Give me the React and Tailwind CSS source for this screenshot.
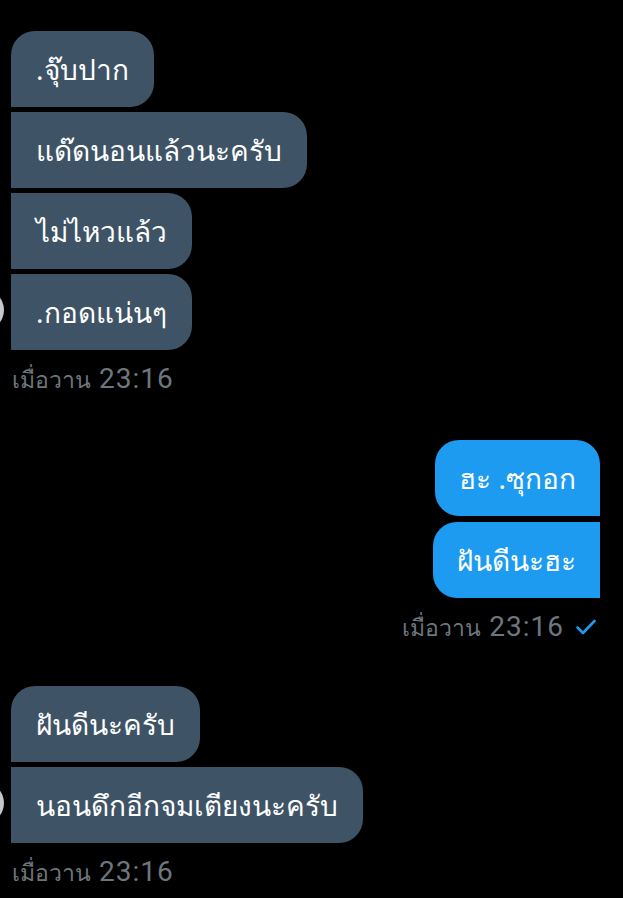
import React from "react";

const font = { fontFamily: '"Noto Sans", Roboto, "Open Sans", sans-serif' };

const Received = ({ text, pos, avatar }) => {
  const corners =
    pos === "first"
      ? "rounded-tl-[24px] rounded-tr-[24px] rounded-br-[24px]"
      : "rounded-tr-[24px] rounded-br-[24px]";
  return (
    <div className="relative flex">
      {avatar && (
        <div className="absolute left-[-49px] top-[15px] w-[42px] h-[42px] rounded-full bg-[#c4c8cc]" />
      )}
      <div className={`bg-[#3e5466] text-white text-[28px] leading-[36px] px-[25px] py-[20px] ${corners}`}>
        {text}
      </div>
    </div>
  );
};

const Sent = ({ text, pos }) => {
  const corners =
    pos === "first"
      ? "rounded-tl-[24px] rounded-tr-[24px] rounded-bl-[24px]"
      : "rounded-tl-[24px] rounded-bl-[24px]";
  return (
    <div className="flex justify-end">
      <div className={`bg-[#1d9bf0] text-white text-[28px] leading-[36px] px-[24px] py-[20px] ${corners}`}>
        {text}
      </div>
    </div>
  );
};

const Stamp = ({ right, read }) => (
  <div className={`flex items-center mt-[14px] h-[30px] text-[#6e767d] ${right ? "justify-end" : ""}`}>
    <span className="text-[23px] leading-[30px]">เมื่อวาน</span>
    <span className="ml-[8px] text-[28px] leading-[30px] tracking-[1px] font-['Roboto']">23:16</span>
    {read && (
      <svg width="24" height="24" viewBox="0 0 24 24" className="ml-[10px]">
        <path d="M3.5 12.5l5.5 5.5L20.5 6" fill="none" stroke="#1d9bf0" strokeWidth="2.6" strokeLinecap="round" strokeLinejoin="round" />
      </svg>
    )}
  </div>
);

export default function App() {
  return (
    <div className="w-[623px] h-[898px] bg-black overflow-hidden" style={font}>
      <div className="flex flex-col gap-[5px] pl-[11px] pt-[31px]">
        <Received text=".จุ๊บปาก" pos="first" />
        <Received text="แด๊ดนอนแล้วนะครับ" pos="mid" />
        <Received text="ไม่ไหวแล้ว" pos="mid" />
        <Received text=".กอดแน่นๆ" pos="last" avatar />
      </div>
      <div className="pl-[12px]">
        <Stamp />
      </div>

      <div className="flex flex-col gap-[6px] pr-[23px] mt-[46px]">
        <Sent text="ฮะ .ซุกอก" pos="first" />
        <Sent text="ฝันดีนะฮะ" pos="last" />
      </div>
      <div className="pr-[25px]">
        <Stamp right read />
      </div>

      <div className="flex flex-col gap-[5px] pl-[11px] mt-[44px]">
        <Received text="ฝันดีนะครับ" pos="first" />
        <Received text="นอนดึกอีกจมเตียงนะครับ" pos="last" avatar />
      </div>
      <div className="pl-[12px]">
        <Stamp />
      </div>
    </div>
  );
}
